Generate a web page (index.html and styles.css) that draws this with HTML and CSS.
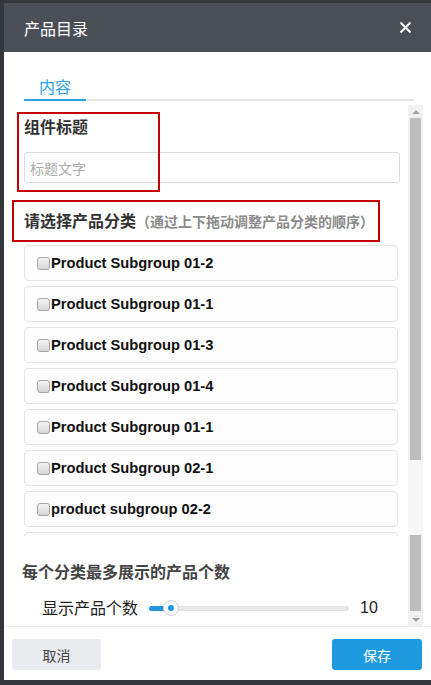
FILE: index.html
```html
<!DOCTYPE html>
<html lang="zh-CN">
<head>
<meta charset="utf-8">
<title>产品目录</title>
<link rel="stylesheet" href="styles.css">
</head>
<body>
<div class="dialog">
  <div class="dlg-header">
    <span class="dlg-title">产品目录</span>
    <svg class="close" width="13" height="13" viewBox="0 0 13 13"><path d="M1.5 1.5 L11.5 11.5 M11.5 1.5 L1.5 11.5" stroke="#fff" stroke-width="2" fill="none"/></svg>
  </div>
  <div class="tabs"><span class="tab active">内容</span></div>
  <div class="scroll-area">
    <div class="scroll-content">
      <div class="group group-title">
        <div class="label">组件标题</div>
        <input class="text-input" type="text" placeholder="标题文字">
        <div class="mark mark-1"></div>
      </div>
      <div class="group group-cats">
        <div class="label">请选择产品分类<span class="hint">（通过上下拖动调整产品分类的顺序）</span></div>
        <div class="mark mark-2"></div>
      </div>
      <ul class="cat-list">
        <li class="cat-item"><input type="checkbox" class="cb"><span>Product Subgroup 01-2</span></li>
        <li class="cat-item"><input type="checkbox" class="cb"><span>Product Subgroup 01-1</span></li>
        <li class="cat-item"><input type="checkbox" class="cb"><span>Product Subgroup 01-3</span></li>
        <li class="cat-item"><input type="checkbox" class="cb"><span>Product Subgroup 01-4</span></li>
        <li class="cat-item"><input type="checkbox" class="cb"><span>Product Subgroup 01-1</span></li>
        <li class="cat-item"><input type="checkbox" class="cb"><span>Product Subgroup 02-1</span></li>
        <li class="cat-item"><input type="checkbox" class="cb"><span>product subgroup 02-2</span></li>
        <li class="cat-item"></li>
      </ul>
      <div class="section-title">每个分类最多展示的产品个数</div>
      <div class="slider-row">
        <span class="slider-label">显示产品个数</span>
        <div class="slider">
          <div class="slider-fill" style="width:18px"></div>
          <div class="slider-handle" style="left:13px"><span class="dot"></span></div>
        </div>
        <span class="slider-value">10</span>
      </div>
    </div>
    <div class="scrollbar">
      <div class="sb-arrow sb-up"></div>
      <div class="sb-track">
        <div class="sb-thumb sb-thumb-a"></div>
        <div class="sb-gap"></div>
        <div class="sb-thumb sb-thumb-b"></div>
      </div>
      <div class="sb-arrow sb-down"></div>
    </div>
  </div>
  <div class="dlg-footer">
    <button class="btn btn-cancel">取消</button>
    <button class="btn btn-save">保存</button>
  </div>
</div>
</body>
</html>
```

FILE: styles.css
```css
* { box-sizing: border-box; }
html, body { margin: 0; padding: 0; }
body {
  background: #33363b;
  width: 431px;
  height: 685px;
  overflow: hidden;
  font-family: "Noto Sans CJK SC", "Noto Sans", sans-serif;
  color: #333;
}
.dialog {
  margin: 3px 0 0 4px;
  width: 427px;
  height: 677px;
  background: #fff;
  display: flex;
  flex-direction: column;
}
.dlg-header {
  height: 49px;
  flex: none;
  background: #4a4f57;
  display: flex;
  align-items: center;
  justify-content: space-between;
  padding: 0 19px 0 20px;
}
.dlg-title {
  color: #fff;
  font-size: 16px;
  line-height: 20px;
}
.close { display: block; }
.tabs {
  flex: none;
  margin: 0 17px 4px 20px;
  padding-top: 22px;
  border-bottom: 2px solid #e6e6e6;
  display: flex;
}
.tab {
  font-size: 16px;
  line-height: 24px;
  padding: 0 15px 1px 15px;
  color: #29a1e2;
  border-bottom: 2px solid #29a1e2;
  margin-bottom: -2px;
}
.scroll-area {
  flex: none;
  height: 521px;
  display: flex;
  overflow: hidden;
}
.scroll-content {
  width: 404px;
  flex: none;
  padding: 10px 8px 0 20px;
  overflow: hidden;
}
.group { position: relative; }
.label {
  font-size: 16px;
  line-height: 22px;
  font-weight: bold;
  color: #333;
}
.text-input {
  display: block;
  width: 376px;
  height: 31px;
  margin-top: 15px;
  border: 1px solid #dcdcdc;
  border-radius: 3px;
  padding: 0 5px;
  font-family: "Noto Sans CJK SC", sans-serif;
  font-size: 14px;
  color: #333;
  outline: none;
}
.text-input::placeholder { color: #aaa; }
.group-cats { margin-top: 26px; }
.hint {
  font-size: 14px;
  color: #8a8a8a;
  font-weight: bold;
}
.mark {
  position: absolute;
  border: 2px solid #c40000;
  pointer-events: none;
}
.mark-1 { left: -7px; top: -3px; width: 143px; height: 80px; }
.mark-2 { left: -12px; top: -9px; width: 368px; height: 42px; }
.cat-list {
  list-style: none;
  margin: 13px 2px 0 0;
  padding: 0;
  height: 291px;
  overflow: hidden;
  display: flex;
  flex-direction: column;
  gap: 5px;
}
.cat-item {
  flex: none;
  height: 36px;
  border: 1px solid #e4e4e4;
  border-radius: 4px;
  background: #fdfdfd;
  display: flex;
  align-items: center;
  padding-left: 12px;
  font-family: "Liberation Sans", Arial, sans-serif;
  font-weight: bold;
  font-size: 14.7px;
  color: #111;
}
.cb {
  appearance: none;
  -webkit-appearance: none;
  width: 13px;
  height: 13px;
  margin: 0 1px 0 0;
  border: 1px solid #a6a6a6;
  border-radius: 3px;
  background: linear-gradient(#f4f4f4, #d6d6d6);
  flex: none;
}
.section-title {
  margin-top: 24px;
  font-size: 16px;
  line-height: 22px;
  font-weight: bold;
  color: #444;
  margin-left: -2px;
}
.slider-row {
  margin-top: 13px;
  height: 24px;
  display: flex;
  align-items: center;
  padding-left: 18px;
}
.slider-label {
  font-size: 16px;
  line-height: 24px;
  color: #222;
  width: 107px;
  flex: none;
}
.slider {
  position: relative;
  width: 200px;
  height: 5px;
  background: #e8e8e8;
  border: 1px solid #e0e0e0;
  border-radius: 3px;
  margin-top: 2px;
  flex: none;
}
.slider-fill {
  position: absolute;
  left: -1px;
  top: -1px;
  height: 5px;
  background: #2296dc;
  border-radius: 3px;
}
.slider-handle {
  position: absolute;
  top: -7px;
  width: 16px;
  height: 16px;
  border-radius: 50%;
  background: #fff;
  border: 1px solid #cfcfcf;
  display: flex;
  align-items: center;
  justify-content: center;
}
.dot {
  width: 6px;
  height: 6px;
  border-radius: 50%;
  background: #2296dc;
}
.slider-value {
  margin-left: 11px;
  font-family: "Liberation Sans", Arial, sans-serif;
  font-size: 16px;
  color: #222;
  margin-top: 2px;
}
.scrollbar {
  width: 15px;
  flex: none;
  background: #f1f1f1;
  display: flex;
  flex-direction: column;
}
.sb-arrow {
  height: 13px;
  flex: none;
  display: flex;
  align-items: center;
  justify-content: center;
}
.sb-up::before, .sb-down::before {
  content: "";
  width: 0;
  height: 0;
  border-left: 4px solid transparent;
  border-right: 4px solid transparent;
}
.sb-up::before { border-bottom: 4px solid #a3a3a3; }
.sb-down::before { border-top: 4px solid #a3a3a3; }
.sb-track {
  flex: 1;
  display: flex;
  flex-direction: column;
}
.sb-thumb {
  margin-left: 2px;
  width: 11px;
  background: #bdbdbd;
}
.sb-thumb-a { height: 342px; }
.sb-gap { height: 75px; background: #f7f7f7; }
.sb-thumb-b { flex: 1; margin-bottom: 2px; }
.dlg-footer {
  flex: none;
  border-top: 1px solid #ececec;
  padding: 12px 9px 10px 8px;
  display: flex;
  justify-content: space-between;
}
.btn {
  width: 89px;
  height: 31px;
  border: none;
  border-radius: 3px;
  font-family: "Noto Sans CJK SC", sans-serif;
  font-size: 14px;
  padding: 0;
}
.btn-cancel { background: #e9ebee; color: #444; }
.btn-save { width: 90px; background: #1e9be0; color: #fff; }
```
